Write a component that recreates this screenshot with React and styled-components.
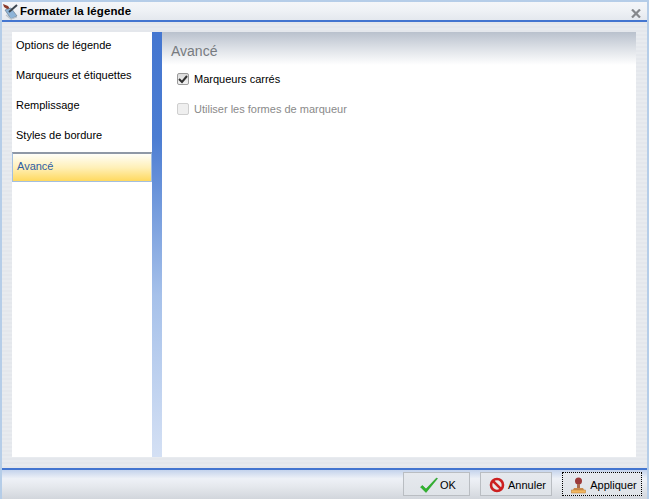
import React from "react"
import styled, {createGlobalStyle} from "styled-components"

const GlobalStyle = createGlobalStyle`
    html, body {
        margin: 0;
        padding: 0;
        background: #e6e9ee;
    }
    * {
        box-sizing: border-box;
    }
`
const Dialog = styled.div`
    width: 649px;
    height: 499px;
    display: flex;
    flex-direction: column;
    border-style: solid;
    border-color: #b5cde8;
    border-width: 2px 2px 0 2px;
    background: repeating-linear-gradient(180deg, #e4e7ec 0, #e4e7ec 2px, #e8ebef 2px, #e8ebef 4px);
    font-family: "Liberation Sans", sans-serif;
    font-size: 11px;
    line-height: 14px;
    color: #000;
`
const TitleBar = styled.div`
    height: 20px;
    flex: none;
    display: flex;
    align-items: center;
    justify-content: space-between;
    border-bottom: 2px solid #4476d0;
    background: linear-gradient(180deg, #f4f6f9 0%, #eef1f5 50%, #e4e8ee 100%);
    padding-right: 6px;
`
const TitleGroup = styled.div`
    display: flex;
    align-items: center;
`
const Title = styled.span`
    font-weight: bold;
    font-size: 11.5px;
    letter-spacing: 0.1px;
`
const CloseIcon = styled.svg`
    width: 10px;
    height: 9px;
    margin-top: 4px;
`
const Body = styled.div`
    flex: 1;
    min-height: 0;
    display: flex;
    padding: 10px 11px 11px 10px;
`
const Sidebar = styled.div`
    width: 140px;
    flex: none;
    background: #fff;
    display: flex;
    flex-direction: column;
`
const NavItem = styled.div`
    height: 30px;
    padding: 6px 0 0 4px;
    color: #000;
`
const ActiveNavItem = styled(NavItem)`
    padding: 5px 0 0 4px;
    color: #2f5da5;
    border: 1px solid #a3bfe0;
    border-top: 2px solid #8f98a6;
    background: linear-gradient(180deg, #fffef8 0%, #fff0b8 50%, #ffd95f 100%);
`
const Strip = styled.div`
    width: 10px;
    flex: none;
    background: linear-gradient(180deg, #4476d0 0%, #4c7dd2 25%, #a6c1ea 62%, #d4e0f4 100%);
`
const Main = styled.div`
    flex: 1;
    background: #fff;
    display: flex;
    flex-direction: column;
`
const SectionHeader = styled.div`
    height: 33px;
    padding: 10px 0 0 9px;
    font-size: 14px;
    line-height: 18px;
    color: #777b80;
    background: linear-gradient(180deg, #b9c1cd 0%, #dde1e7 50%, #ffffff 100%);
`
const Options = styled.div`
    display: flex;
    flex-direction: column;
    gap: 16px;
    padding: 7px 0 0 15px;
`
const CheckRow = styled.label`
    display: flex;
    align-items: center;
    gap: 5px;
    height: 14px;
    color: ${props => props.$disabled ? "#8a8a8a" : "#000"};
`
const CheckBox = styled.span`
    width: 12px;
    height: 12px;
    flex: none;
    display: flex;
    align-items: center;
    justify-content: center;
    border: 1px solid ${props => props.$disabled ? "#cfcfcf" : "#9a9a9a"};
    border-radius: 2px;
    background: ${props => props.$disabled ? "#efefef" : "linear-gradient(180deg, #dcdcdc, #f2f2f2)"};
`
const Footer = styled.div`
    height: 31px;
    flex: none;
    border-top: 2px solid #4476d0;
    background: linear-gradient(180deg, #c4d3ec 0%, #eef1f7 30%, #e6e9ee 55%, #d2d6dc 100%);
    display: flex;
    justify-content: flex-end;
    align-items: flex-start;
    gap: 10px;
    padding: 2px 5px 0 0;
`
const FooterButton = styled.button`
    width: ${props => props.$width}px;
    height: 24px;
    margin: 0;
    padding: 2px 0 0 ${props => props.$indent}px;
    display: flex;
    align-items: center;
    justify-content: center;
    gap: ${props => props.$gap}px;
    font: inherit;
    color: #000;
    background: linear-gradient(180deg, #e6e9ee, #dfe3e8);
    border: 1px ${props => props.$focused ? "dotted #000" : "solid #b9bdc2"};
    outline: none;
`

const AppIcon = () => (
    <svg width="18" height="18" viewBox="0 0 18 18">
        <path d="M1 2 L6 4 L8 7 L5 7 L2 5 Z" fill="#8a3a2a"/>
        <path d="M3 8 L9 6 L15 14 L9 17 Z" fill="#8db4d8" stroke="#6c7f92" strokeWidth="0.7"/>
        <path d="M7 10 L15 3" stroke="#3c4650" strokeWidth="2"/>
        <path d="M4 13 L9 17 L15 15" stroke="#b9c4ce" strokeWidth="1.2" fill="none"/>
    </svg>
)

const CheckIcon = () => (
    <svg width="18" height="16" viewBox="0 0 18 16">
        <path d="M0.5 10 L2.5 8.5 L6 12 L16.5 1 L17.5 1.5 L6 15.5 Z" fill="#2fb52b" stroke="#1a8f1c" strokeWidth="0.5"/>
    </svg>
)

const CancelIcon = () => (
    <svg width="16" height="16" viewBox="0 0 16 16">
        <circle cx="8" cy="8" r="6" fill="#e8e8e8" stroke="#cc2020" strokeWidth="2.6"/>
        <path d="M3.8 3.8 L12.2 12.2" stroke="#cc2020" strokeWidth="2.6"/>
    </svg>
)

const StampIcon = () => (
    <svg width="15" height="17" viewBox="0 0 15 17">
        <circle cx="7.5" cy="4" r="3.5" fill="#9c3a3a"/>
        <rect x="6" y="7" width="3" height="4" fill="#a86a50"/>
        <path d="M3 11 H12 L13 13 H2 Z" fill="#c98a4c"/>
        <rect x="0.5" y="13" width="14" height="3" fill="#f0b660" stroke="#b87a30" strokeWidth="0.5"/>
    </svg>
)

const navItems = ["Options de légende", "Marqueurs et étiquettes", "Remplissage", "Styles de bordure"]

const App = () => {
    return (
        <Dialog>
            <GlobalStyle/>
            <TitleBar>
                <TitleGroup>
                    <AppIcon/>
                    <Title>Formater la légende</Title>
                </TitleGroup>
                <CloseIcon viewBox="0 0 10 9">
                    <path d="M1 0.5 L9 8.5 M9 0.5 L1 8.5" stroke="#85888c" strokeWidth="2.2"/>
                </CloseIcon>
            </TitleBar>
            <Body>
                <Sidebar>
                    {navItems.map(item => <NavItem key={item}>{item}</NavItem>)}
                    <ActiveNavItem>Avancé</ActiveNavItem>
                </Sidebar>
                <Strip/>
                <Main>
                    <SectionHeader>Avancé</SectionHeader>
                    <Options>
                        <CheckRow>
                            <CheckBox>
                                <svg width="10" height="10" viewBox="0 0 10 10">
                                    <path d="M1 5 L4 8 L9 2" stroke="#333" strokeWidth="2" fill="none"/>
                                </svg>
                            </CheckBox>
                            Marqueurs carrés
                        </CheckRow>
                        <CheckRow $disabled>
                            <CheckBox $disabled/>
                            Utiliser les formes de marqueur
                        </CheckRow>
                    </Options>
                </Main>
            </Body>
            <Footer>
                <FooterButton $width={67} $gap={2} $indent={3}><CheckIcon/>OK</FooterButton>
                <FooterButton $width={72} $gap={3} $indent={3}><CancelIcon/>Annuler</FooterButton>
                <FooterButton $width={80} $gap={4} $indent={4} $focused><StampIcon/>Appliquer</FooterButton>
            </Footer>
        </Dialog>
    )
}

export default App
